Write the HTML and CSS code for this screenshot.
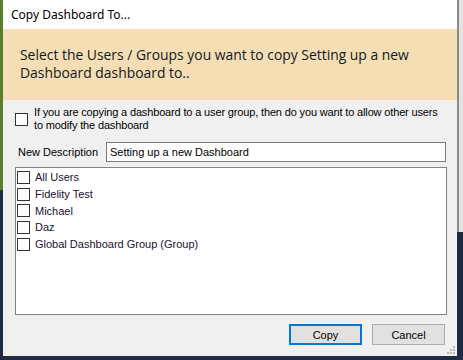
FILE: index.html
```html
<!DOCTYPE html>
<html lang="en">
<head>
  <meta charset="UTF-8">
  <title>Copy Dashboard To...</title>
  <link rel="stylesheet" href="styles.css">
</head>
<body>
  <div class="desktop">
    <div class="edge-left"></div>

    <div class="dialog">
      <div class="titlebar">Copy Dashboard To...</div>

      <div class="banner">
        Select the Users / Groups you want to copy Setting up a new Dashboard dashboard to..
      </div>

      <div class="content">
        <label class="allow-row">
          <span class="box"></span>
          <span class="allow-text">If you are copying a dashboard to a user group, then do you want to allow other users to modify the dashboard</span>
        </label>

        <div class="desc-row">
          <span class="desc-label">New Description</span>
          <input class="desc-input" type="text" value="Setting up a new Dashboard">
        </div>

        <div class="listbox">
          <div class="item"><span class="box"></span>All Users</div>
          <div class="item"><span class="box"></span>Fidelity Test</div>
          <div class="item"><span class="box"></span>Michael</div>
          <div class="item"><span class="box"></span>Daz</div>
          <div class="item"><span class="box"></span>Global Dashboard Group (Group)</div>
        </div>

        <div class="buttons">
          <button class="btn primary">Copy</button>
          <button class="btn">Cancel</button>
        </div>
      </div>

      <div class="grip">
        <svg width="9" height="9" viewBox="0 0 9 9">
          <rect x="6" y="0" width="2" height="2" fill="#b8b8b8"/>
          <rect x="3" y="3" width="2" height="2" fill="#b8b8b8"/>
          <rect x="6" y="3" width="2" height="2" fill="#b8b8b8"/>
          <rect x="0" y="6" width="2" height="2" fill="#b8b8b8"/>
          <rect x="3" y="6" width="2" height="2" fill="#b8b8b8"/>
          <rect x="6" y="6" width="2" height="2" fill="#b8b8b8"/>
        </svg>
      </div>
    </div>

    <div class="edge-right">
      <div class="edge-right-top"></div>
    </div>
  </div>
</body>
</html>
```

FILE: styles.css
```css
body {
  margin: 0;
  background: #1f2a44;
  font-family: "Liberation Sans", Arial, sans-serif;
}
.desktop {
  display: flex;
  height: 360px;
  width: 463px;
  background: #1f2a44;
}
.edge-left {
  width: 3px;
  height: 190px;
  background: #5a7f2c;
  flex-shrink: 0;
}
.edge-right {
  width: 6px;
  flex-shrink: 0;
}
.edge-right-top {
  height: 232px;
  background: #e3e3e3;
  border-left: 2px solid #8a8a8a;
  box-sizing: border-box;
}
.dialog {
  position: relative;
  width: 454px;
  height: 356px;
  flex-shrink: 0;
  background: #f0f0f0;
  display: flex;
  flex-direction: column;
}
.titlebar {
  height: 29px;
  background: #fff;
  font-family: "Noto Sans", "Open Sans", sans-serif;
  font-size: 12px;
  color: #000;
  padding-left: 8px;
  line-height: 30px;
}
.banner {
  height: 71px;
  box-sizing: border-box;
  background: #f5deb3;
  padding: 17px 12px 0 17px;
  font-family: "Open Sans", "Noto Sans", sans-serif;
  font-size: 13.9px;
  line-height: 18px;
  color: #111827;
}
.content {
  padding: 0 10px 0 12px;
  font-size: 11px;
  color: #000;
}
.box {
  display: inline-block;
  width: 11px;
  height: 11px;
  border: 1px solid #333;
  background: #fff;
  flex-shrink: 0;
}
.allow-row {
  display: flex;
  align-items: flex-start;
  margin-top: 11px;
  line-height: 13px;
}
.allow-row .box {
  margin-top: 2px;
}
.allow-text {
  margin-left: 6px;
  margin-top: -5px;
  letter-spacing: -0.15px;
}
.desc-row {
  display: flex;
  align-items: center;
  margin-top: 10px;
  height: 20px;
}
.desc-label {
  width: 91px;
  padding-left: 3px;
  box-sizing: border-box;
}
.desc-input {
  width: 340px;
  height: 20px;
  box-sizing: border-box;
  border: 1px solid #7a7a7a;
  padding: 0 3px;
  font-family: "Liberation Sans", Arial, sans-serif;
  font-size: 11px;
  color: #000;
  background: #fff;
  outline: none;
  margin: 0;
}
.listbox {
  margin-top: 5px;
  width: 432px;
  height: 148px;
  box-sizing: border-box;
  background: #fff;
  border: 1px solid #828282;
  padding-top: 1px;
  padding-left: 1px;
}
.item {
  display: flex;
  align-items: center;
  height: 16.7px;
  color: #1a1030;
}
.item .box {
  margin-right: 5px;
}
.buttons {
  display: flex;
  justify-content: flex-end;
  gap: 10px;
  margin-top: 9px;
  padding-right: 2px;
  width: 432px;
  box-sizing: border-box;
}
.btn {
  width: 73px;
  height: 21px;
  box-sizing: border-box;
  background: #e1e1e1;
  border: 1px solid #adadad;
  font-family: "Liberation Sans", Arial, sans-serif;
  font-size: 11px;
  color: #000;
  padding: 0;
  margin: 0;
}
.btn.primary {
  border: 2px solid #0078d7;
}
.grip {
  position: absolute;
  right: 1px;
  bottom: 1px;
  width: 9px;
  height: 9px;
}
.grip svg {
  display: block;
}
```
